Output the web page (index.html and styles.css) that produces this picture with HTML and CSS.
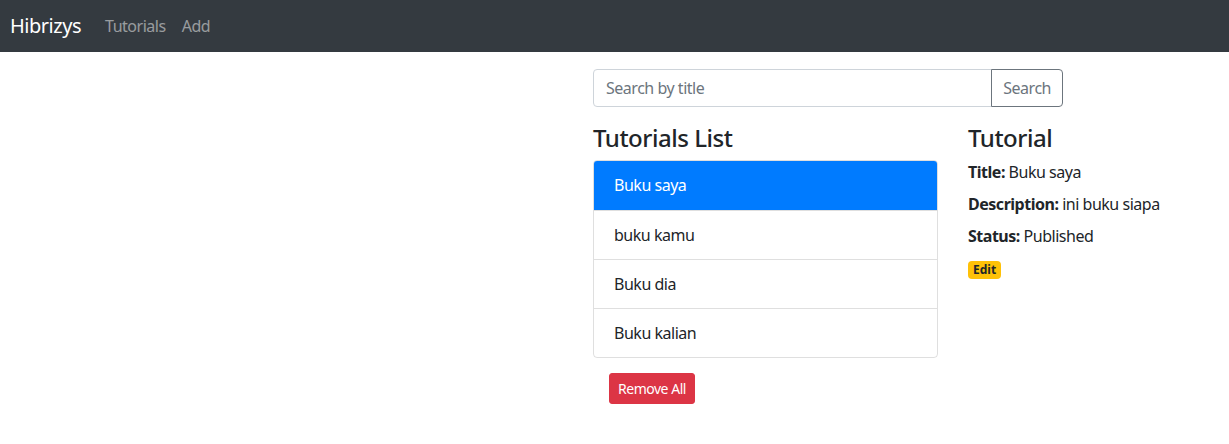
FILE: index.html
```html
<!DOCTYPE html>
<html lang="en">
<head>
<meta charset="utf-8">
<title>Hibrizys</title>
<link rel="stylesheet" href="styles.css">
</head>
<body>
<nav class="navbar">
  <a class="brand" href="#">Hibrizys</a>
  <div class="nav-links">
    <a class="nav-link" href="#">Tutorials</a>
    <a class="nav-link" href="#">Add</a>
  </div>
</nav>
<main class="container">
  <div class="list-row">
    <div class="col-search">
      <div class="input-group">
        <input class="form-control" type="text" placeholder="Search by title">
        <button class="btn-search" type="button">Search</button>
      </div>
    </div>
    <div class="col-half">
      <h4 class="heading">Tutorials List</h4>
      <ul class="list-group">
        <li class="list-item active">Buku saya</li>
        <li class="list-item">buku kamu</li>
        <li class="list-item">Buku dia</li>
        <li class="list-item">Buku kalian</li>
      </ul>
      <button class="btn-danger" type="button">Remove All</button>
    </div>
    <div class="col-detail">
      <h4 class="heading">Tutorial</h4>
      <div class="field"><label><strong>Title:</strong></label> Buku saya</div>
      <div class="field"><label><strong>Description:</strong></label> ini buku siapa</div>
      <div class="field"><label><strong>Status:</strong></label> Published</div>
      <a class="badge" href="#">Edit</a>
    </div>
  </div>
</main>
</body>
</html>
```
FILE: styles.css
```css
* { box-sizing: border-box; }
html, body { margin: 0; padding: 0; }
body {
  font-family: "Noto Sans", "Open Sans", sans-serif;
  font-size: 16px;
  line-height: 1.5;
  letter-spacing: -0.03em;
  color: #212529;
  background: #fff;
}
.navbar {
  height: 52px;
  background: #343a40;
  display: flex;
  align-items: center;
  padding: 0 16px 0 10px;
}
.brand {
  color: #fff;
  text-decoration: none;
  font-size: 20px;
  margin-right: 16px;
}
.nav-links { display: flex; }
.nav-link {
  color: rgba(255,255,255,.5);
  text-decoration: none;
  padding: 0 8px;
  font-size: 16px;
}
.container {
  margin-top: 17px;
  padding-left: 578px;
}
.list-row {
  display: flex;
  flex-wrap: wrap;
}
.col-search { width: 500px; padding: 0 15px; }
.col-half { width: 375px; padding: 0 15px; }
.col-detail { flex: 1; min-width: 0; padding: 0 15px; }
.input-group {
  display: flex;
  height: 38px;
  margin-bottom: 16px;
}
.form-control {
  flex: 1;
  min-width: 0;
  height: 38px;
  border: 1px solid #ced4da;
  border-radius: 4px 0 0 4px;
  padding: 6px 12px;
  font: inherit;
  letter-spacing: inherit;
  color: #495057;
}
.form-control::placeholder { color: #6c757d; }
.btn-search {
  height: 38px;
  border: 1px solid #6c757d;
  border-radius: 0 4px 4px 0;
  background: #fff;
  color: #6c757d;
  font: inherit;
  letter-spacing: inherit;
  padding: 6px 11px;
  margin-left: -1px;
}
.heading {
  margin: 0 0 8px;
  font-size: 24px;
  font-weight: 500;
  line-height: 1.2;
  padding-top: 1px;
  height: 29px;
}
.list-group {
  list-style: none;
  margin: 0;
  padding: 0;
  border: 1px solid rgba(0,0,0,.125);
  border-radius: 4px;
  overflow: hidden;
}
.list-item {
  padding: 12px 20px;
  height: 49px;
  border-top: 1px solid rgba(0,0,0,.125);
}
.list-item:first-child { border-top: none; }
.list-item.active {
  background: #007bff;
  color: #fff;
  margin: -1px -1px 0;
  padding: 13px 21px 12px;
  height: 50px;
}
.btn-danger {
  margin: 15px 16px 16px;
  background: #dc3545;
  border: 1px solid #dc3545;
  color: #fff;
  font: inherit;
  letter-spacing: inherit;
  font-size: 14px;
  line-height: 1.5;
  padding: 4px 8px;
  border-radius: 3px;
}
.field label {
  display: inline-block;
  margin-bottom: 8px;
}
.field strong { font-weight: 700; }
.badge {
  display: inline-block;
  background: #ffc107;
  color: #212529;
  font-size: 12px;
  font-weight: 700;
  line-height: 1;
  padding: 3px 5px;
  border-radius: 4px;
  text-decoration: none;
  margin-top: 5px;
  letter-spacing: 0;
}
```
